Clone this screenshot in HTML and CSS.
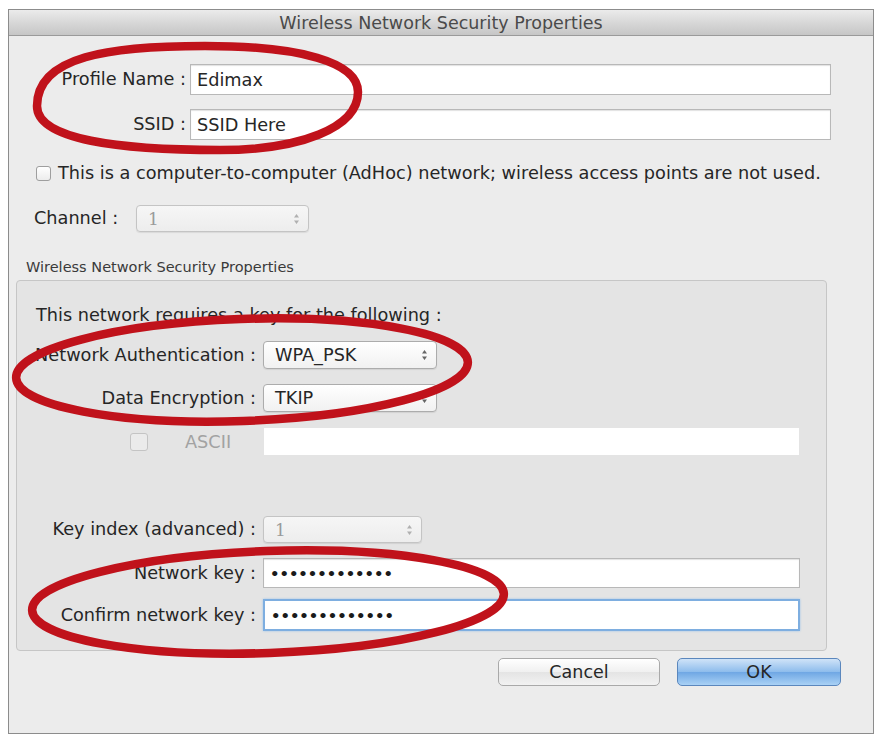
FILE: index.html
```html
<!DOCTYPE html>
<html>
<head>
<meta charset="utf-8">
<link rel="stylesheet" href="styles.css">
</head>
<body>
<div class="window">
  <div class="titlebar">Wireless Network Security Properties</div>
  <div class="content">
    <div class="row top-row r-profile">
      <span class="label top-label">Profile Name :</span>
      <div class="field wide">Edimax</div>
    </div>
    <div class="row top-row r-ssid">
      <span class="label top-label">SSID :</span>
      <div class="field wide">SSID Here</div>
    </div>
    <div class="row r-adhoc">
      <span class="check"></span>
      <span class="label">This is a computer-to-computer (AdHoc) network; wireless access points are not used.</span>
    </div>
    <div class="row r-channel">
      <span class="label">Channel :</span>
      <div class="select disabled channel">
        <span>1</span>
        <svg class="stepper" width="7" height="12" viewBox="0 0 7 12"><path d="M3.5 1 L6 4.5 H1 Z M3.5 11 L6 7.5 H1 Z"/></svg>
      </div>
    </div>
    <div class="group-title">Wireless Network Security Properties</div>
    <div class="group">
      <div class="group-intro">This network requires a key for the following :</div>
      <div class="row g-row r-auth">
        <span class="label g-label">Network Authentication :</span>
        <div class="select enc">
          <span>WPA_PSK</span>
          <svg class="stepper" width="7" height="12" viewBox="0 0 7 12"><path d="M3.5 1 L6 4.5 H1 Z M3.5 11 L6 7.5 H1 Z"/></svg>
        </div>
      </div>
      <div class="row g-row r-enc">
        <span class="label g-label">Data Encryption :</span>
        <div class="select enc">
          <span>TKIP</span>
          <svg class="stepper" width="7" height="12" viewBox="0 0 7 12"><path d="M3.5 1 L6 4.5 H1 Z M3.5 11 L6 7.5 H1 Z"/></svg>
        </div>
      </div>
      <div class="row r-ascii">
        <span class="ascii-left">
          <span class="check dim"></span>
          <span class="ascii-text">ASCII</span>
        </span>
        <div class="field ascii-field"></div>
      </div>
      <div class="row g-row r-keyindex">
        <span class="label g-label">Key index (advanced) :</span>
        <div class="select disabled keyidx">
          <span>1</span>
          <svg class="stepper" width="7" height="12" viewBox="0 0 7 12"><path d="M3.5 1 L6 4.5 H1 Z M3.5 11 L6 7.5 H1 Z"/></svg>
        </div>
      </div>
      <div class="row g-row r-key">
        <span class="label g-label">Network key :</span>
        <div class="field key"><span class="dots">•••••••••••••</span></div>
      </div>
      <div class="row g-row r-confirm">
        <span class="label g-label">Confirm network key :</span>
        <div class="field key focus"><span class="dots">•••••••••••••</span></div>
      </div>
    </div>
    <div class="buttons">
      <div class="btn cancel">Cancel</div>
      <div class="btn ok">OK</div>
    </div>
  </div>
</div>
<svg class="marks" width="874" height="734" viewBox="0 0 874 734">
  <path d="M37 106 C37 56 110 46 205 46 C300 46 358 62 358 92 C358 128 300 150 220 150 C120 150 37 140 37 106 Z"/>
  <ellipse cx="242" cy="370" rx="226" ry="51" transform="rotate(-2 242 370)"/>
  <ellipse cx="268" cy="602" rx="236" ry="51" transform="rotate(-2 268 602)"/>
</svg>
</body>
</html>
```

FILE: styles.css
```css
html, body {
  margin: 0;
  padding: 0;
  background: #ffffff;
}
body {
  width: 874px;
  height: 734px;
  position: relative;
  overflow: hidden;
  font-family: "DejaVu Sans", "Liberation Sans", sans-serif;
  color: #262626;
}
.window {
  margin: 9px 0 0 8px;
  width: 864px;
  height: 723px;
  border: 1px solid #8c8c8c;
  background: #ececec;
  display: flex;
  flex-direction: column;
}
.titlebar {
  height: 25px;
  border-bottom: 1px solid #9a9a9a;
  background: linear-gradient(#ebebeb, #d4d4d4 60%, #c6c6c6);
  text-align: center;
  font-size: 17.5px;
  line-height: 26px;
  color: #4a4a4a;
}
.content {
  flex: 1;
  display: flex;
  flex-direction: column;
  position: relative;
}
.row {
  display: flex;
  align-items: center;
}
.label {
  font-size: 17.7px;
  line-height: 21px;
  white-space: nowrap;
}
.top-label {
  width: 177px;
  text-align: right;
  margin-right: 4px;
}
.r-profile { margin-top: 28px; }
.r-ssid { margin-top: 14px; }
.field {
  background: #ffffff;
  border: 1px solid #b8b8b8;
  box-shadow: inset 0 1px 1px rgba(0,0,0,0.12);
  box-sizing: border-box;
  font-size: 17.7px;
  display: flex;
  align-items: center;
  padding-left: 6px;
}
.wide {
  width: 641px;
  height: 31px;
}
.r-adhoc { margin-top: 23px; margin-left: 27px; }
.check {
  width: 15px;
  height: 15px;
  border: 1px solid #9e9e9e;
  border-radius: 3px;
  background: linear-gradient(#ffffff, #ececec);
  box-sizing: border-box;
  margin-right: 7px;
}
.check.dim {
  width: 18px;
  height: 18px;
  border-color: #c4c4c4;
  background: #ebebeb;
  margin-right: 0;
}
.r-channel { margin-top: 21px; margin-left: 25px; }
.r-channel .label { width: 102px; }
.select {
  box-sizing: border-box;
  border: 1px solid #acacac;
  border-radius: 4px;
  background: linear-gradient(#ffffff, #f1f1f1);
  box-shadow: 0 1px 1px rgba(0,0,0,0.08);
  display: flex;
  align-items: center;
  justify-content: space-between;
  padding: 0 8px 0 11px;
  font-size: 17.7px;
}
.select .stepper { fill: #666; }
.select.disabled {
  color: #9a9a9a;
  border-color: #c4c4c4;
  background: linear-gradient(#f6f6f6, #ededed);
  font-family: "DejaVu Serif", serif;
  font-size: 17px;
}
.select.disabled .stepper { fill: #b0b0b0; }
.channel {
  width: 173px;
  height: 27px;
}
.group-title {
  margin: 27px 0 0 17px;
  font-size: 14.5px;
  color: #3a3a3a;
  height: 17px;
  line-height: 17px;
}
.group {
  margin: 4px 0 0 7px;
  width: 811px;
  height: 371px;
  box-sizing: border-box;
  border: 1px solid #c6c6c6;
  border-radius: 4px;
  background: #e4e4e4;
  display: flex;
  flex-direction: column;
}
.group-intro {
  font-size: 17.7px;
  margin: 24px 0 0 19px;
  height: 21px;
  line-height: 21px;
}
.g-label {
  width: 239px;
  text-align: right;
  margin-right: 7px;
}
.enc {
  width: 174px;
  height: 28px;
  padding-left: 11px;
}
.r-auth { margin-top: 15px; }
.r-enc { margin-top: 15px; }
.r-ascii { margin-top: 16px; }
.ascii-left {
  width: 247px;
  display: flex;
  align-items: center;
  padding-left: 113px;
  box-sizing: border-box;
}
.ascii-text {
  margin-left: 37px;
  font-size: 17.7px;
  color: #a2a2a2;
}
.ascii-field {
  width: 535px;
  height: 27px;
  border: none;
  box-shadow: none;
}
.keyidx {
  width: 159px;
  height: 27px;
}
.r-keyindex { margin-top: 61px; }
.key {
  width: 537px;
  height: 30px;
}
.r-key { margin-top: 15px; }
.r-confirm { margin-top: 11px; }
.key.focus {
  height: 32px;
  border: 2px solid #7eaee0;
  box-shadow: 0 0 2px #9cc4ec;
}
.dots {
  font-size: 14.8px;
  font-weight: bold;
  color: #1a1a1a;
}
.buttons {
  display: flex;
  justify-content: flex-end;
  gap: 17px;
  margin: 7px 32px 0 0;
}
.btn {
  box-sizing: border-box;
  height: 28px;
  border-radius: 5px;
  font-size: 17.5px;
  display: flex;
  align-items: center;
  justify-content: center;
}
.cancel {
  width: 162px;
  border: 1px solid #a9a9a9;
  background: linear-gradient(#ffffff, #f0f0f0 50%, #e4e4e4 51%, #f2f2f2);
}
.ok {
  width: 164px;
  border: 1px solid #5b87bd;
  background: linear-gradient(#cfe3f8, #8dbcec 50%, #6fa7e4 51%, #a9d1f5);
}
.marks {
  position: absolute;
  left: 0;
  top: 0;
  pointer-events: none;
  fill: none;
  stroke: #c0121b;
  stroke-width: 8.5;
}
```
